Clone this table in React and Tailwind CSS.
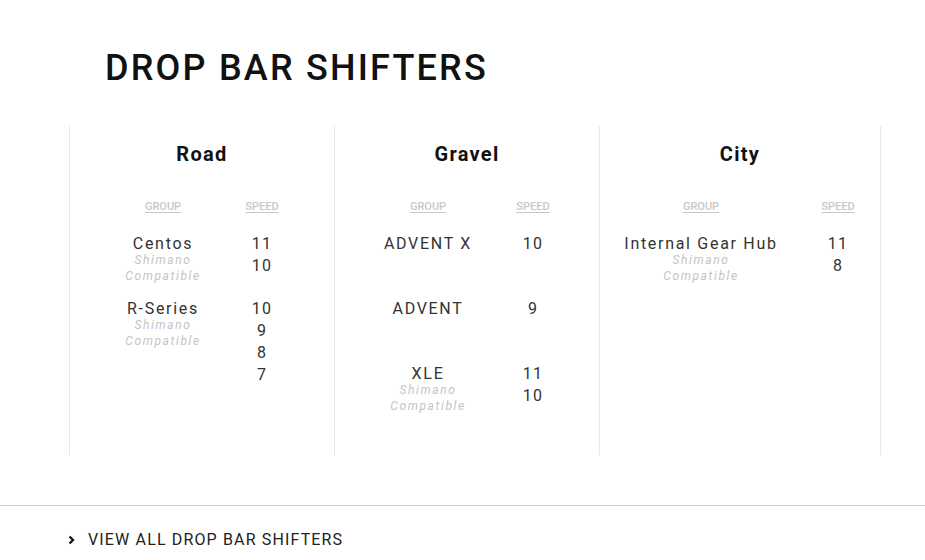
import React from "react";

const columns = [
  {
    title: "Road",
    width: "w-[265px]",
    table: "ml-[33px] grid-cols-[120px_60px] gap-x-[9px]",
    rows: [
      { group: "Centos", compat: true, speeds: ["11", "10"] },
      { group: "R-Series", compat: true, speeds: ["10", "9", "8", "7"] },
    ],
  },
  {
    title: "Gravel",
    width: "w-[265px]",
    table: "ml-[33px] grid-cols-[120px_60px] gap-x-[15px]",
    rows: [
      { group: "ADVENT X", compat: false, speeds: ["10"] },
      { group: "ADVENT", compat: false, speeds: ["9"] },
      { group: "XLE", compat: true, speeds: ["11", "10"] },
    ],
  },
  {
    title: "City",
    width: "w-[282px] border-r",
    table: "ml-[21px] grid-cols-[160px_60px] gap-x-[27px]",
    rows: [{ group: "Internal Gear Hub", compat: true, speeds: ["11", "8"] }],
  },
];

const Column = ({ col }) => (
  <div className={`${col.width} border-l border-[#e8e8e8] pt-4 pb-[27px]`}>
    <h3 className="text-center text-[20px] leading-[24px] font-bold tracking-[1.3px] text-[#111]">
      {col.title}
    </h3>
    <div className={`grid ${col.table} mt-[33px]`}>
      <div className="text-center text-[11px] leading-4 font-medium text-[#c8c8c8] underline underline-offset-2">
        GROUP
      </div>
      <div className="text-center text-[11px] leading-4 font-medium text-[#c8c8c8] underline underline-offset-2">
        SPEED
      </div>
      {col.rows.map((row, i) => (
        <React.Fragment key={row.group}>
          <div className={`min-h-[65px] pt-[2px] text-center ${i === 0 ? "mt-[18px]" : ""}`}>
            <div className="text-[16px] leading-[18px] tracking-[1.7px] text-[#333] whitespace-nowrap">
              {row.group}
            </div>
            {row.compat && (
              <div className="-mt-px text-[12px] leading-4 italic tracking-[1.6px] text-[#c4c4c4]">
                Shimano
                <br />
                Compatible
              </div>
            )}
          </div>
          <div className={`text-center ${i === 0 ? "mt-[18px]" : ""}`}>
            {row.speeds.map((s) => (
              <div key={s} className="text-[16px] leading-[22px] tracking-[1.2px] text-[#333]">
                {s}
              </div>
            ))}
          </div>
        </React.Fragment>
      ))}
    </div>
  </div>
);

export default function App() {
  return (
    <div className="w-[925px] h-[560px] bg-white overflow-hidden font-['Roboto',sans-serif]">
      <h1 className="pt-[46px] pl-[105px] text-[36px] leading-[44px] font-medium tracking-[2.2px] text-[#111]">
        DROP BAR SHIFTERS
      </h1>
      <div className="flex ml-[69px] mt-[36px]">
        {columns.map((col) => (
          <Column key={col.title} col={col} />
        ))}
      </div>
      <div className="mt-[50px] border-t border-[#cfcfcf]">
        <a href="#" className="flex items-center pt-[22px] pl-[68px] text-[#222]">
          <svg width="8" height="10" viewBox="0 0 8 10" className="mr-[12px]">
            <polyline points="1.5,1.5 5,5 1.5,8.5" fill="none" stroke="#111" strokeWidth="2.2" />
          </svg>
          <span className="text-[16px] leading-6 tracking-[1.15px]">VIEW ALL DROP BAR SHIFTERS</span>
        </a>
      </div>
    </div>
  );
}
